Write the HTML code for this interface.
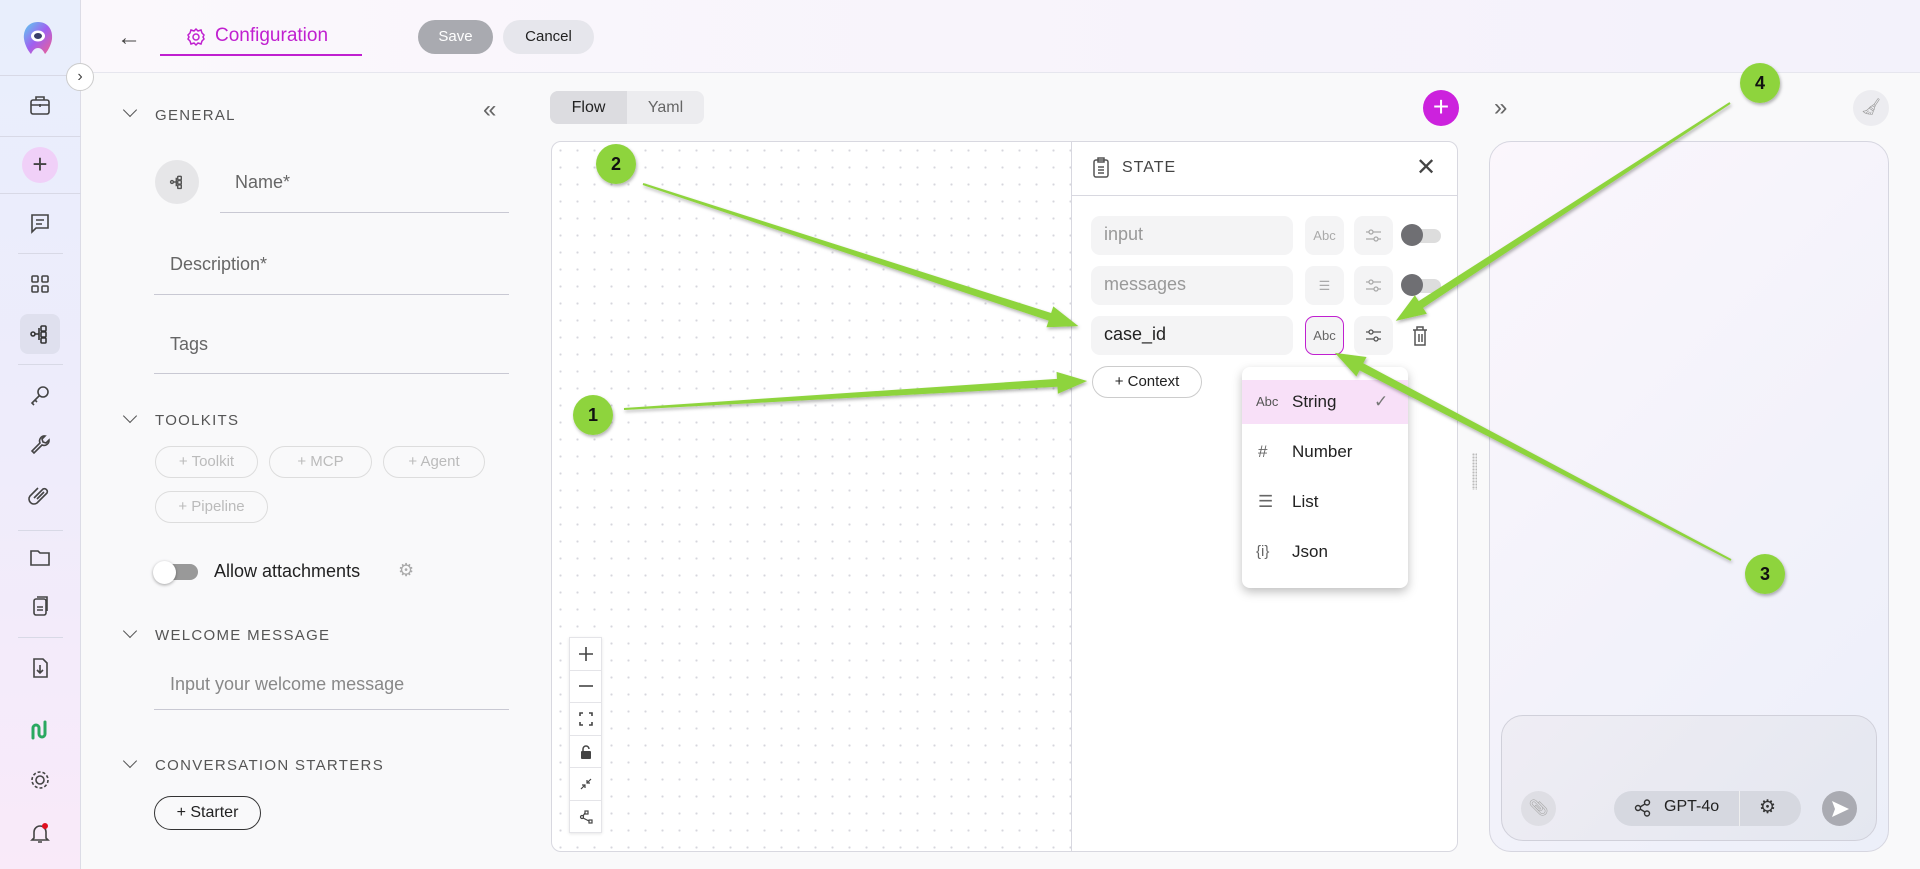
<!DOCTYPE html>
<html><head><meta charset="utf-8"><style>
*{box-sizing:border-box;margin:0;padding:0}
body{width:1920px;height:869px;overflow:hidden;font-family:"Liberation Sans",sans-serif;background:#f9f9fa;position:relative;color:#222}
.a{position:absolute}
.sb{left:0;top:0;width:81px;height:869px;background:linear-gradient(180deg,#e8eefc 0%,#eeecfb 50%,#f9eaf9 100%);border-right:1px solid #dcdce6}
.top{left:81px;top:0;width:1839px;height:73px;background:linear-gradient(90deg,#fbf8fc,#f7f3fb 60%,#f3f2fb);border-bottom:1px solid #e6e6ee}
.ic{position:absolute;left:26px;width:28px;height:28px}
.sep{position:absolute;left:0;width:81px;height:1px;background:#d8d9e6}
.sep2{position:absolute;left:18px;width:45px;height:1px;background:#d8d9e6}
.hd{font-size:15px;letter-spacing:1.3px;color:#555}
.chev{width:10px;height:10px;border-right:1.5px solid #555;border-bottom:1.5px solid #555;transform:rotate(45deg)}
.ph{font-size:18px;color:#666}
.ul{height:1px;background:#c9c9d3}
.chip{height:32px;border:1px solid #ddd;border-radius:16px;color:#bbb;font-size:15px;text-align:center;line-height:30px}
.row{position:absolute;height:39px;border-radius:9px;background:#f4f4f5}
.sq{position:absolute;width:39px;height:39px;border-radius:9px;background:#f4f4f5;text-align:center;line-height:39px;font-size:13px;color:#aaa}
.sq svg{position:absolute;left:11px;top:11px}
.tg{position:absolute;width:38px;height:14px;border-radius:7px;background:#ddd}
.tg:before{content:"";position:absolute;left:-2px;top:-5px;width:22px;height:22px;border-radius:50%;background:#6f6f73}
.mi{position:absolute;left:1242px;width:166px;height:44px;font-size:17px;line-height:44px}
.cc{height:32.6px;border-bottom:1px solid #e4e4e8;display:flex;align-items:center;justify-content:center}
</style></head><body>
<div class="a sb">
 <svg class="a" style="left:20px;top:20px" width="36" height="36" viewBox="0 0 36 36"><defs><linearGradient id="lg" x1="0" y1="0" x2="1" y2="1"><stop offset="0" stop-color="#5ad0f0"/><stop offset=".5" stop-color="#a060f0"/><stop offset="1" stop-color="#f06090"/></linearGradient></defs><path d="M18 2C8 2 3 10 4 19c1 7 5 13 7 15 2-4 4-6 7-6s5 2 7 6c2-2 6-8 7-15C33 10 28 2 18 2z" fill="url(#lg)"/><ellipse cx="18" cy="16" rx="7" ry="5.5" fill="#fff"/><ellipse cx="18" cy="16" rx="4" ry="3" fill="#3a3f6a"/></svg>
 <div class="sep" style="top:75px"></div>
 <svg class="ic" style="top:91px" viewBox="0 0 28 28" fill="none" stroke="#444" stroke-width="1.6"><rect x="5" y="9" width="18" height="14" rx="2"/><path d="M10 9V6h8v3M5 14h18M14 13v3"/></svg>
 <div class="sep" style="top:136px"></div>
 <div class="a" style="left:22px;top:147px;width:36px;height:36px;border-radius:50%;background:#f0d0f8;text-align:center;line-height:34px;font-size:26px;color:#444">+</div>
 <div class="sep" style="top:193px"></div>
 <svg class="ic" style="top:209px" viewBox="0 0 28 28" fill="none" stroke="#444" stroke-width="1.6"><path d="M6 6h16v13H10l-4 4z"/><path d="M10 11h8M10 15h6"/></svg>
 <div class="sep2" style="top:253px"></div>
 <svg class="ic" style="top:270px" viewBox="0 0 28 28" fill="none" stroke="#444" stroke-width="1.6"><rect x="6" y="6" width="6" height="6" rx="1"/><rect x="16" y="6" width="6" height="6" rx="1"/><rect x="6" y="16" width="6" height="6" rx="1"/><rect x="16" y="16" width="6" height="6" rx="1"/></svg>
 <div class="a" style="left:20px;top:314px;width:40px;height:40px;border-radius:8px;background:#dfe0ee"></div>
 <svg class="ic" style="top:320px" viewBox="0 0 28 28" fill="none" stroke="#333" stroke-width="1.6"><circle cx="7" cy="14" r="2"/><rect x="15" y="6" width="5" height="5" rx="1"/><rect x="15" y="12" width="5" height="5" rx="1"/><rect x="15" y="18" width="5" height="5" rx="1"/><path d="M9 14h4M13 8v12"/></svg>
 <div class="sep2" style="top:364px"></div>
 <svg class="ic" style="top:381px" viewBox="0 0 28 28" fill="none" stroke="#444" stroke-width="1.6"><circle cx="17" cy="11" r="5"/><path d="M13 15l-7 7 2 2M9 19l2 2"/></svg>
 <svg class="ic" style="top:431px" viewBox="0 0 28 28" fill="none" stroke="#444" stroke-width="1.6"><path d="M19 5a5 5 0 0 0-5 7L6 20l2 2 8-8a5 5 0 0 0 7-5l-3 3-3-1-1-3z"/></svg>
 <svg class="ic" style="top:482px" viewBox="0 0 28 28" fill="none" stroke="#444" stroke-width="1.6"><path d="M8 16l9-9a3 3 0 0 1 4 4L11 21a5 5 0 0 1-7-7l8-8M11 17l7-7"/></svg>
 <div class="sep2" style="top:530px"></div>
 <svg class="ic" style="top:543px" viewBox="0 0 28 28" fill="none" stroke="#444" stroke-width="1.6"><path d="M5 8h7l2 2h9v12H5z"/></svg>
 <svg class="ic" style="top:592px" viewBox="0 0 28 28" fill="none" stroke="#444" stroke-width="1.6"><rect x="8" y="7" width="12" height="16" rx="2"/><path d="M11 5h10v14M11 15h6M11 18h6"/></svg>
 <div class="sep2" style="top:637px"></div>
 <svg class="ic" style="top:654px" viewBox="0 0 28 28" fill="none" stroke="#444" stroke-width="1.6"><path d="M8 5h9l4 4v14H8z"/><path d="M14 11v8M11 16l3 3 3-3"/></svg>
 <svg class="ic" style="top:716px" viewBox="0 0 28 28" fill="none" stroke="#2aa860" stroke-width="3" stroke-linecap="round"><path d="M7 22V12a3 3 0 0 1 6 0v6a3 3 0 0 0 6 0V6"/></svg>
 <svg class="ic" style="top:766px" viewBox="0 0 28 28" fill="none" stroke="#444" stroke-width="1.6"><circle cx="14" cy="14" r="4"/><circle cx="14" cy="14" r="8" stroke-dasharray="3 2"/></svg>
 <svg class="ic" style="top:819px" viewBox="0 0 28 28" fill="none" stroke="#444" stroke-width="1.6"><path d="M8 19v-6a6 6 0 0 1 12 0v6l2 2H6zM12 23h4"/><circle cx="19" cy="7" r="3" fill="#e01020" stroke="none"/></svg>
</div>
<div class="a top"></div>
<div class="a" style="left:66px;top:63px;width:28px;height:28px;border-radius:50%;background:#fff;border:1px solid #ccc;text-align:center;line-height:25px;font-size:16px;color:#444">›</div>
<div class="a" style="left:117px;top:24px;font-size:24px;color:#444">←</div>
<svg class="a" style="left:186px;top:27px" width="20" height="20" viewBox="0 0 20 20" fill="none" stroke="#c020d0" stroke-width="1.5"><circle cx="10" cy="10" r="3"/><path d="M10 2l2 2 3-1 1 3 2 2-1 2 1 2-2 2-1 3-3-1-2 2-2-2-3 1-1-3-2-2 1-2-1-2 2-2 1-3 3 1z"/></svg>
<div class="a" style="left:215px;top:25px;font-size:19px;color:#c020d0">Configuration</div>
<div class="a" style="left:160px;top:54px;width:202px;height:2px;background:#c020d0"></div>
<div class="a" style="left:418px;top:20px;width:75px;height:34px;border-radius:17px;background:#a9aab0;color:#fff;font-size:15px;text-align:center;line-height:34px">Save</div>
<div class="a" style="left:503px;top:20px;width:91px;height:34px;border-radius:17px;background:#e6e6ec;color:#222;font-size:15px;text-align:center;line-height:34px">Cancel</div>

<!-- left panel -->
<div class="a chev" style="left:125px;top:105px"></div>
<div class="a hd" style="left:155px;top:107px">GENERAL</div>
<div class="a" style="left:483px;top:96px;font-size:24px;color:#666">«</div>
<div class="a" style="left:155px;top:160px;width:44px;height:44px;border-radius:50%;background:#e6e6e8"></div>
<svg class="a" style="left:167px;top:172px" width="20" height="20" viewBox="0 0 28 28" fill="none" stroke="#555" stroke-width="2"><circle cx="7" cy="14" r="2"/><rect x="15" y="6" width="5" height="5" rx="1"/><rect x="15" y="12" width="5" height="5" rx="1"/><rect x="15" y="18" width="5" height="5" rx="1"/><path d="M9 14h4M13 8v12"/></svg>
<div class="a ph" style="left:235px;top:172px">Name*</div>
<div class="a ul" style="left:220px;top:212px;width:289px"></div>
<div class="a ph" style="left:170px;top:254px">Description*</div>
<div class="a ul" style="left:154px;top:294px;width:355px"></div>
<div class="a ph" style="left:170px;top:334px">Tags</div>
<div class="a ul" style="left:154px;top:373px;width:355px"></div>
<div class="a chev" style="left:125px;top:411px"></div>
<div class="a hd" style="left:155px;top:412px">TOOLKITS</div>
<div class="a chip" style="left:155px;top:446px;width:103px">+ Toolkit</div>
<div class="a chip" style="left:269px;top:446px;width:103px">+ MCP</div>
<div class="a chip" style="left:383px;top:446px;width:102px">+ Agent</div>
<div class="a chip" style="left:155px;top:491px;width:113px">+ Pipeline</div>
<div class="a" style="left:160px;top:564px;width:38px;height:16px;border-radius:8px;background:#999"></div>
<div class="a" style="left:153px;top:561px;width:23px;height:23px;border-radius:50%;background:#fff;box-shadow:0 1px 3px rgba(0,0,0,.35)"></div>
<div class="a" style="left:214px;top:561px;font-size:18px;color:#222">Allow attachments</div>
<div class="a" style="left:398px;top:560px;font-size:18px;color:#aaa">⚙</div>
<div class="a chev" style="left:125px;top:626px"></div>
<div class="a hd" style="left:155px;top:627px">WELCOME MESSAGE</div>
<div class="a ph" style="left:170px;top:674px;color:#888">Input your welcome message</div>
<div class="a ul" style="left:154px;top:709px;width:355px"></div>
<div class="a chev" style="left:125px;top:756px"></div>
<div class="a hd" style="left:155px;top:757px">CONVERSATION STARTERS</div>
<div class="a" style="left:154px;top:796px;width:107px;height:34px;border:1.5px solid #333;border-radius:17px;font-size:16px;text-align:center;line-height:31px">+ Starter</div>

<!-- middle -->
<div class="a" style="left:550px;top:91px;width:154px;height:33px;border-radius:8px;background:#ececef"></div>
<div class="a" style="left:550px;top:91px;width:77px;height:33px;border-radius:8px 0 0 8px;background:#dcdce0;font-size:16px;text-align:center;line-height:33px">Flow</div>
<div class="a" style="left:627px;top:91px;width:77px;height:33px;font-size:16px;text-align:center;line-height:33px;color:#666">Yaml</div>
<div class="a" style="left:1423px;top:90px;width:36px;height:36px;border-radius:50%;background:#cc22dd;color:#fff;font-size:28px;text-align:center;line-height:34px">+</div>
<div class="a" style="left:551px;top:141px;width:907px;height:711px;border:1px solid #d8d8e0;border-radius:10px;background-color:#fff;background-image:radial-gradient(#d6d6dc 1px,transparent 1.2px);background-size:17px 17px"></div>
<div class="a" style="left:1071px;top:142px;width:386px;height:709px;background:#fff;border-left:1px solid #d8d8e0;border-radius:0 10px 10px 0"></div>
<div class="a" style="left:1071px;top:195px;width:386px;height:1px;background:#d8d8e0"></div>
<svg class="a" style="left:1092px;top:157px" width="18" height="22" viewBox="0 0 18 22" fill="none" stroke="#555" stroke-width="1.5"><rect x="2" y="3" width="14" height="17" rx="2"/><rect x="6" y="1" width="6" height="4"/><path d="M6 10h6M6 13h6M6 16h6"/></svg>
<div class="a" style="left:1122px;top:159px;font-size:16px;letter-spacing:1px;color:#444">STATE</div>
<div class="a" style="left:1416px;top:153px;font-size:24px;color:#444">✕</div>
<div class="row" style="left:1091px;top:216px;width:202px"></div><div class="a" style="left:1104px;top:224px;font-size:18px;color:#999">input</div>
<div class="sq" style="left:1305px;top:216px">Abc</div>
<div class="sq" style="left:1354px;top:216px"><svg width="17" height="17" viewBox="0 0 17 17" fill="none" stroke="#aaa" stroke-width="1.3"><path d="M1 5h15M1 12h15"/><circle cx="6" cy="5" r="2" fill="#f4f4f5"/><circle cx="11" cy="12" r="2" fill="#f4f4f5"/></svg></div>
<div class="tg" style="left:1403px;top:229px"></div>
<div class="row" style="left:1091px;top:266px;width:202px"></div><div class="a" style="left:1104px;top:274px;font-size:18px;color:#999">messages</div>
<div class="sq" style="left:1305px;top:266px">☰</div>
<div class="sq" style="left:1354px;top:266px"><svg width="17" height="17" viewBox="0 0 17 17" fill="none" stroke="#aaa" stroke-width="1.3"><path d="M1 5h15M1 12h15"/><circle cx="6" cy="5" r="2" fill="#f4f4f5"/><circle cx="11" cy="12" r="2" fill="#f4f4f5"/></svg></div>
<div class="tg" style="left:1403px;top:279px"></div>
<div class="row" style="left:1091px;top:316px;width:202px"></div><div class="a" style="left:1104px;top:324px;font-size:18px;color:#222">case_id</div>
<div class="sq" style="left:1305px;top:316px;border:1px solid #c020d0;background:#f4f4f5;color:#666;line-height:37px">Abc</div>
<div class="sq" style="left:1354px;top:316px"><svg width="17" height="17" viewBox="0 0 17 17" fill="none" stroke="#555" stroke-width="1.3"><path d="M1 5h15M1 12h15"/><circle cx="6" cy="5" r="2" fill="#f4f4f5"/><circle cx="11" cy="12" r="2" fill="#f4f4f5"/></svg></div>
<svg class="a" style="left:1411px;top:325px" width="18" height="22" viewBox="0 0 18 22" fill="none" stroke="#555" stroke-width="1.5"><path d="M2 5h14M6 5V2h6v3M4 5v15h10V5M8 9v8M11 9v8"/></svg>
<div class="a" style="left:1092px;top:366px;width:110px;height:32px;border:1px solid #ccc;border-radius:16px;background:#fff;font-size:15px;text-align:center;line-height:30px">+ Context</div>
<div class="a" style="left:1242px;top:367px;width:166px;height:221px;background:#fff;border-radius:8px;box-shadow:0 4px 10px rgba(0,0,0,.25)"></div>
<div class="a" style="left:1242px;top:380px;width:166px;height:44px;background:#f8e0f8"></div>
<div class="mi" style="top:380px"><span style="position:absolute;left:14px;font-size:13px;color:#555">Abc</span><span style="position:absolute;left:50px">String</span><span style="position:absolute;left:132px;color:#777">✓</span></div>
<div class="mi" style="top:430px"><span style="position:absolute;left:16px;color:#666">#</span><span style="position:absolute;left:50px">Number</span></div>
<div class="mi" style="top:480px"><span style="position:absolute;left:16px;color:#666">☰</span><span style="position:absolute;left:50px">List</span></div>
<div class="mi" style="top:530px"><span style="position:absolute;left:14px;color:#666;font-size:15px">{i}</span><span style="position:absolute;left:50px">Json</span></div>
<div class="a" style="left:569px;top:637px;width:33px;height:196px;background:#fff;border:1px solid #e4e4e8;box-shadow:0 1px 3px rgba(0,0,0,.1)">
 <div class="cc"><svg width="16" height="16" viewBox="0 0 16 16" stroke="#444" stroke-width="1.6"><path d="M8 1v14M1 8h14"/></svg></div>
 <div class="cc"><svg width="16" height="16" viewBox="0 0 16 16" stroke="#444" stroke-width="1.6"><path d="M1 8h14"/></svg></div>
 <div class="cc"><svg width="14" height="14" viewBox="0 0 14 14" fill="none" stroke="#444" stroke-width="1.6"><path d="M1 4V1h3M10 1h3v3M13 10v3h-3M4 13H1v-3"/></svg></div>
 <div class="cc"><svg width="12" height="14" viewBox="0 0 12 14"><path d="M3 6V4a3 3 0 0 1 6 0" fill="none" stroke="#444" stroke-width="1.5"/><rect x="1" y="6" width="10" height="8" rx="1" fill="#444"/></svg></div>
 <div class="cc"><svg width="12" height="12" viewBox="0 0 12 12" fill="none" stroke="#444" stroke-width="1.2"><path d="M1 11l4-4M2 7h3v3M11 1L7 5M7 2v3h3"/></svg></div>
 <div class="cc" style="border:0"><svg width="14" height="14" viewBox="0 0 14 14" fill="none" stroke="#444" stroke-width="1.2"><circle cx="3" cy="7" r="1.5"/><rect x="6" y="1" width="3" height="3"/><rect x="10" y="10" width="3" height="3"/><path d="M4 6l2-3M4 8l6 3"/></svg></div>
</div>
<div class="a" style="left:1472px;top:453px;width:5px;height:37px;background-image:radial-gradient(#bbb 1px,transparent 1.2px);background-size:3px 3px"></div>

<!-- right -->
<div class="a" style="left:1494px;top:94px;font-size:24px;color:#666">»</div>
<div class="a" style="left:1853px;top:90px;width:36px;height:36px;border-radius:50%;background:#ececf0;text-align:center;line-height:36px;color:#999;font-size:16px">🧹︎</div>
<div class="a" style="left:1489px;top:141px;width:400px;height:711px;border:1px solid #d6d6e0;border-radius:22px;background:linear-gradient(135deg,#fbf6fc,#eceff9)"></div>
<div class="a" style="left:1501px;top:715px;width:376px;height:126px;border:1px solid #d0d0da;border-radius:22px;background:linear-gradient(135deg,#efedf4,#e4e7f0)"></div>
<div class="a" style="left:1521px;top:791px;width:35px;height:35px;border-radius:50%;background:#dedee4;text-align:center;line-height:35px;color:#aaa">📎︎</div>
<div class="a" style="left:1614px;top:791px;width:187px;height:35px;border-radius:18px;background:#d6d8e0"></div>
<div class="a" style="left:1739px;top:791px;width:1px;height:35px;background:#eee"></div>
<svg class="a" style="left:1634px;top:799px" width="18" height="18" viewBox="0 0 18 18" fill="none" stroke="#333" stroke-width="1.4"><circle cx="4" cy="9" r="2.5"/><circle cx="13" cy="3.5" r="2.5"/><circle cx="13" cy="14.5" r="2.5"/><path d="M6 8l5-3M6 10l5 3"/></svg>
<div class="a" style="left:1664px;top:798px;font-size:16px;color:#222">GPT-4o</div>
<div class="a" style="left:1759px;top:796px;font-size:19px;color:#333">⚙</div>
<div class="a" style="left:1822px;top:791px;width:35px;height:35px;border-radius:50%;background:#aaabb2"></div>
<svg class="a" style="left:1830px;top:799px" width="20" height="20" viewBox="0 0 20 20"><path d="M2 2l17 8-17 8 3-8z" fill="#fff"/></svg>

<!-- annotations -->
<svg class="a" style="left:0;top:0" width="1920" height="869">
<defs><filter id="sh"><feDropShadow dx="1" dy="2" stdDeviation="1.5" flood-opacity=".3"/></filter></defs>
<g fill="#8ed43e" filter="url(#sh)">
<polygon transform="translate(624,409) rotate(-3.46)" points="0,-1 434,-4 434,-11 464,0 434,11 434,4 0,1"/>
<polygon transform="translate(643,184) rotate(18.08)" points="0,-1 428,-4 428,-11 458,0 428,11 428,4 0,1"/>
<polygon transform="translate(1731,560) rotate(207.6)" points="0,-1 417,-4 417,-11 447,0 417,11 417,4 0,1"/>
<polygon transform="translate(1730,103) rotate(146.9)" points="0,-1 369,-4 369,-11 399,0 369,11 369,4 0,1"/>
<circle cx="593" cy="415" r="20"/><circle cx="616" cy="164" r="20"/><circle cx="1765" cy="574" r="20"/><circle cx="1760" cy="83" r="20"/>
</g>
<g font-family="Liberation Sans" font-weight="bold" font-size="18" fill="#111" text-anchor="middle">
<text x="593" y="421">1</text><text x="616" y="170">2</text><text x="1765" y="580">3</text><text x="1760" y="89">4</text></g>
</svg>
</body></html>
